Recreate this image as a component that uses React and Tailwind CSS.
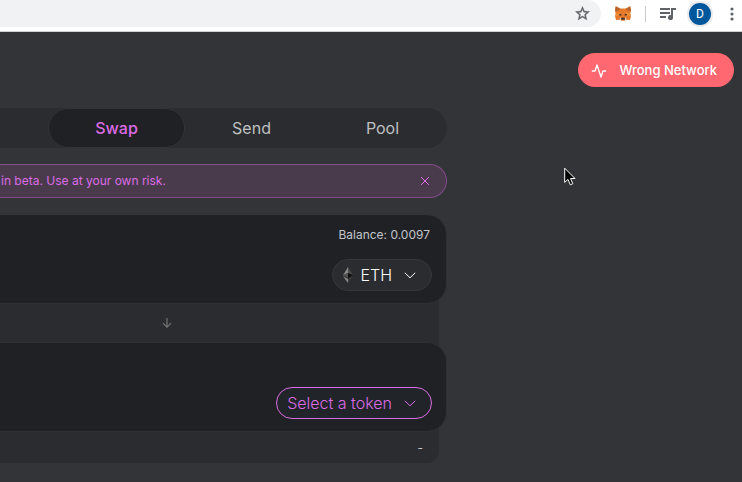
import React from "react";

function Fox() {
  return (
    <svg viewBox="0 0 16 15" className="h-[15px] w-4" aria-hidden="true">
      <path d="M0.8 0.2 5.6 2.6H10.4L15.2 0.2 16 4.6 15.4 7.6 15.9 10.6 15 14 11.2 13.8 9.4 14.8H6.6L4.8 13.8 1 14 0.1 10.6 0.6 7.6 0 4.6Z" fill="#e67a2a" />
      <path d="M0.8 0.2 5.4 3.2 4 4.2 .9 5.4 0 4.6ZM15.2 0.2 10.6 3.2 12 4.2 15.1 5.4 16 4.6Z" fill="#b8622c" />
      <path d="M1 7.6 5.2 6.2 4 9.4 0.2 10.6ZM15 7.6 10.8 6.2 12 9.4 15.8 10.6Z" fill="#ef8d35" />
      <path d="M3.8 8.6 6.2 7.8 6.4 9.6 4.6 9.4ZM12.2 8.6 9.8 7.8 9.6 9.6 11.4 9.4Z" fill="#3a3436" />
      <path d="M4.6 11.6 6.4 12 6.2 14.4 5 13.8ZM11.4 11.6 9.6 12 9.8 14.4 11 13.8Z" fill="#d9c4b3" />
      <path d="M6.4 11.8h3.2l.4 1.8H6Z" fill="#28282c" />
    </svg>
  );
}

function Star() {
  return (
    <svg viewBox="0 0 24 24" className="h-[17px] w-[17px]" fill="#5f6368" stroke="#5f6368" strokeWidth="0.5" aria-hidden="true">
      <path d="m22 9.24-7.19-.62L12 2 9.19 8.63 2 9.24l5.46 4.73L5.82 21 12 17.27 18.18 21l-1.63-7.03L22 9.24zM12 15.4l-3.76 2.27 1-4.28-3.32-2.88 4.38-.38L12 6.1l1.71 4.04 4.38.38-3.32 2.88 1 4.28L12 15.4z" />
    </svg>
  );
}

function BrowserBar() {
  return (
    <header className="flex h-8 items-start border-b border-[#d0d1d3] bg-white">
      <div className="flex h-[27px] min-w-0 flex-1 items-center justify-end rounded-r-[14px] bg-[#f1f2f3] pr-[10px]">
        <button type="button" aria-label="Bookmark"><Star /></button>
      </div>
      <div className="flex h-[27px] items-center pl-[14px]">
        <button type="button" aria-label="Wallet extension"><Fox /></button>
        <span className="ml-[14px] h-4 w-px bg-[#c8cacd]" />
        <button type="button" aria-label="Media" className="ml-3">
          <svg viewBox="0 0 20 16" className="h-4 w-5" fill="#5f6368" aria-hidden="true">
            <path d="M2 2h10v2H2zM2 6h10v2H2zM2 10h6v2H2zM13 2h5v2h-3v7.5a2.5 2.5 0 1 1-2-2.4z" />
          </svg>
        </button>
        <button type="button" className="ml-[9px] flex h-[26px] w-[26px] items-center justify-center rounded-full bg-[#e9eaec]">
          <span className="flex h-[22px] w-[22px] items-center justify-center rounded-full bg-[#01579b] font-[Roboto,sans-serif] text-xs leading-none text-white">D</span>
        </button>
        <button type="button" aria-label="Menu" className="ml-[14px] mr-[5px]">
          <svg viewBox="0 0 10 16" className="h-4 w-[10px]" fill="#5f6368" aria-hidden="true">
            <circle cx="5" cy="3" r="1.6" /><circle cx="5" cy="8" r="1.6" /><circle cx="5" cy="13" r="1.6" />
          </svg>
        </button>
      </div>
    </header>
  );
}

function Chevron() {
  return (
    <svg viewBox="0 0 12 7" className="h-[7px] w-3" fill="none" stroke="currentColor" aria-hidden="true">
      <path d="M.8.8 6 5.8 11.2.8" />
    </svg>
  );
}

export default function App() {
  return (
    <div className="min-h-screen overflow-hidden bg-[#333437] font-[Inter,sans-serif] text-[#c3c5cb]">
      <BrowserBar />
      <div className="flex justify-end pr-2 pt-[21px]">
        <button type="button" className="flex h-[34px] items-center rounded-full bg-[#ff6871] pl-[13px] pr-[17px] pt-px text-[13px] font-medium text-white">
          <svg viewBox="0 0 24 24" className="mr-3 h-4 w-4" fill="none" stroke="currentColor" strokeWidth="2" strokeLinecap="round" strokeLinejoin="round" aria-hidden="true">
            <path d="M22 12h-4l-3 9L9 3l-3 9H2" />
          </svg>
          Wrong Network
        </button>
      </div>

      <main className="w-full max-w-[447px] pt-[21px]">
        <nav className="flex h-10 rounded-r-full bg-[#2b2c2f] pl-12 text-base text-[#bfc1c1]">
          <a href="#swap" className="flex w-[137px] items-center justify-center rounded-full border border-[#333433] bg-[#202124] font-medium text-[#dc6be5]">Swap</a>
          <a href="#send" className="flex w-[133px] items-center justify-center">Send</a>
          <a href="#pool" className="flex flex-1 items-center justify-center">Pool</a>
        </nav>

        <div className="mt-4 flex h-[34px] items-center justify-between rounded-r-full border border-l-0 border-[#844b89] bg-[#493b4b] pl-px pr-4 text-xs text-[#dc6be5]">
          <span>in beta. Use at your own risk.</span>
          <button type="button" aria-label="Dismiss">
            <svg viewBox="0 0 10 10" className="h-[10px] w-[10px]" stroke="currentColor" aria-hidden="true">
              <path d="M1 1 9 9M9 1 1 9" />
            </svg>
          </button>
        </div>

        <div className="mt-[17px] pb-5">
          <section className="relative h-[89px] rounded-r-[20px] border-b border-r border-[#2f3033] bg-[#202124] pr-[14px] pt-3">
            <p className="pr-[2px] text-right text-xs leading-4">Balance: 0.0097</p>
            <div className="mt-4 flex justify-end">
              <button type="button" className="flex h-8 items-center rounded-full border border-[#36373a] bg-[#2b2c2f] pl-[10px] pr-[15px] text-base font-light text-white">
                <svg viewBox="0 0 10 16" className="mr-[7px] h-4 w-[10px]" aria-hidden="true">
                  <path d="M5 0 0 8.2 5 6Z" fill="#8a8a8a" />
                  <path d="M5 0 10 8.2 5 6Z" fill="#4a4a4b" />
                  <path d="M0 8.2 5 6V11Z" fill="#505050" />
                  <path d="M10 8.2 5 6V11Z" fill="#111" />
                  <path d="M0 9.2 5 16V12Z" fill="#8a8a8a" />
                  <path d="M10 9.2 5 16V12Z" fill="#3a3a3a" />
                </svg>
                <span className="mr-3">ETH</span>
                <Chevron />
              </button>
            </div>
          </section>

          <div className="-my-5 mr-2 flex h-[78px] items-center justify-center bg-[#2b2c2f] pr-[105px] text-[#737373]">
            <button type="button" aria-label="Switch tokens">
              <svg viewBox="0 0 10 10" className="h-[10px] w-[10px]" fill="none" stroke="currentColor" strokeWidth="1.2" aria-hidden="true">
                <path d="M5 0V9.2M1 5.2 5 9.2 9 5.2" />
              </svg>
            </button>
          </div>

          <section className="relative flex h-[90px] items-end justify-end rounded-r-[20px] border-y border-r border-[#2f3033] bg-[#202124] pb-3 pr-[14px]">
            <button type="button" className="flex h-8 items-center rounded-full border border-[#dc6be5] bg-[#212429] pl-[10px] pr-[15px] text-base font-light text-[#dc6be5]">
              <span className="mr-3">Select a token</span>
              <Chevron />
            </button>
          </section>

          <div className="-mt-5 mr-2 h-[51px] rounded-br-[12px] bg-[#2b2c2f] pr-4 pt-7 text-right text-xs leading-4">-</div>
        </div>
      </main>

      <svg viewBox="0 0 12 19" className="absolute left-[564px] top-[167px] h-[19px] w-3" aria-hidden="true">
        <path d="M.7 1.2V15.4L4 12.4 6.3 17.8 8.8 16.7 6.5 11.5H11Z" fill="#000" stroke="#fff" />
      </svg>
    </div>
  );
}
